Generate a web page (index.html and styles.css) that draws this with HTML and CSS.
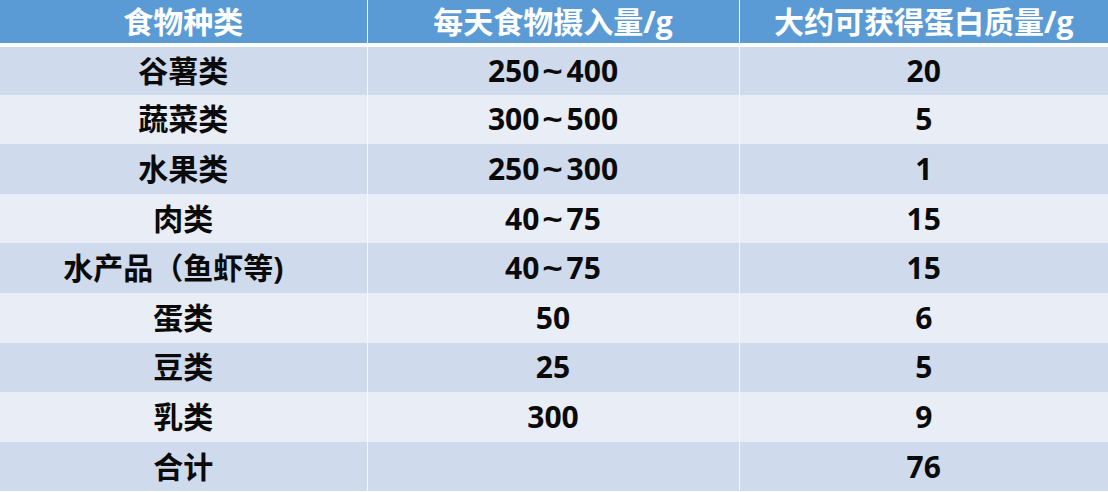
FILE: index.html
```html
<!DOCTYPE html>
<html lang="zh-CN">
<head>
<meta charset="utf-8">
<title>食物蛋白质</title>
<link rel="stylesheet" href="styles.css">
</head>
<body>
<table class="food">
  <colgroup>
    <col class="c1">
    <col class="c2">
    <col class="c3">
  </colgroup>
  <thead>
    <tr>
      <th>食物种类</th>
      <th>每天食物摄入量/g</th>
      <th>大约可获得蛋白质量/g</th>
    </tr>
  </thead>
  <tbody>
    <tr class="dark"><td>谷薯类</td><td>250<span class="sep">~</span>400</td><td>20</td></tr>
    <tr class="light"><td>蔬菜类</td><td>300<span class="sep">~</span>500</td><td>5</td></tr>
    <tr class="dark"><td>水果类</td><td>250<span class="sep">~</span>300</td><td>1</td></tr>
    <tr class="light"><td>肉类</td><td>40<span class="sep">~</span>75</td><td>15</td></tr>
    <tr class="dark"><td class="shift">水产品（鱼虾等)</td><td>40<span class="sep">~</span>75</td><td>15</td></tr>
    <tr class="light"><td>蛋类</td><td>50</td><td>6</td></tr>
    <tr class="dark"><td>豆类</td><td>25</td><td>5</td></tr>
    <tr class="light"><td>乳类</td><td>300</td><td>9</td></tr>
    <tr class="dark"><td>合计</td><td></td><td>76</td></tr>
  </tbody>
</table>
</body>
</html>
```

FILE: styles.css
```css
html, body {
  margin: 0;
  padding: 0;
  background: #ffffff;
}

body {
  width: 1108px;
  height: 492px;
  overflow: hidden;
  font-family: "Open Sans", "Noto Sans CJK SC", sans-serif;
  font-weight: 700;
  font-size: 30px;
}

.food {
  width: 1108px;
  border-collapse: collapse;
  border-spacing: 0;
  table-layout: fixed;
}

.c1 { width: 367px; }
.c2 { width: 372px; }
.c3 { width: 369px; }

.food th,
.food td {
  padding: 0;
  text-align: center;
  vertical-align: middle;
  line-height: 1;
  white-space: nowrap;
}

.food th + th,
.food td + td {
  border-left: 1px solid #f4f7fb;
}

.food th {
  height: 43px;
  background: #5b9bd5;
  color: #ffffff;
  border-bottom: 4px solid #ffffff;
}

.food tbody tr {
  height: 49.6px;
}

.food td {
  color: #0a0a0a;
}

.food td.shift {
  padding-right: 20px;
}

.sep {
  display: inline-block;
  margin: 0 5px;
  transform: scaleX(1.2);
}

.dark td {
  background: #cfdaec;
}

.light td {
  background: #e9edf5;
}
```
